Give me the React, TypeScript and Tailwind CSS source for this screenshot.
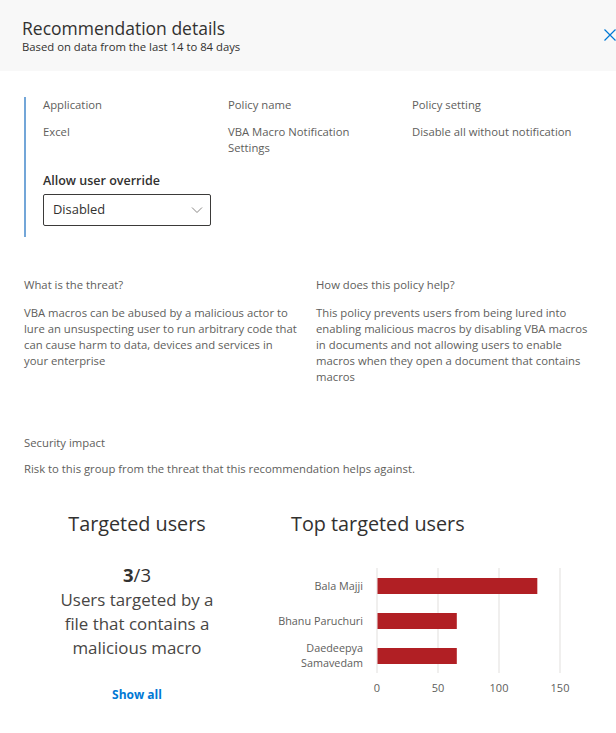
import React from 'react';

const font = { fontFamily: '"Open Sans", "Noto Sans", sans-serif' };

const policyFields = [
  { label: 'Application', value: 'Excel', width: 'max-w-[150px]' },
  { label: 'Policy name', value: 'VBA Macro Notification Settings', width: 'max-w-[150px]' },
  { label: 'Policy setting', value: 'Disable all without notification', width: 'max-w-[180px]' },
];

const topUsers = [
  { name: ['Bala Majji'], count: 131 },
  { name: ['Bhanu Paruchuri'], count: 65 },
  { name: ['Daedeepya', 'Samavedam'], count: 65 },
];

const TopUsersChart = () => {
  const x0 = 107;
  const scale = (290 - 107) / 150;
  const ticks = [0, 50, 100, 150];
  const labelFont = '"Open Sans", sans-serif';
  return (
    <svg width="330" height="140" viewBox="0 0 330 140" className="block">
      {ticks.map((t) => (
        <g key={t}>
          <line x1={x0 + t * scale} x2={x0 + t * scale} y1={6} y2={111} stroke="#e1dfdd" strokeWidth="1" />
          <text x={x0 + t * scale} y={130} textAnchor="middle" fontSize="11" fill="#605e5c" fontFamily={labelFont}>
            {t}
          </text>
        </g>
      ))}
      {topUsers.map((u, i) => {
        const y = 16 + i * 35;
        return (
          <g key={i}>
            <rect x={x0 + 0.5} y={y} width={u.count * scale} height={16} fill="#b11f24" />
            {u.name.length === 1 ? (
              <text x={93} y={y + 12} textAnchor="end" fontSize="10.8" fill="#605e5c" fontFamily={labelFont}>
                {u.name[0]}
              </text>
            ) : (
              <text textAnchor="end" fontSize="10.8" fill="#605e5c" fontFamily={labelFont}>
                <tspan x={93} y={y + 4}>{u.name[0]}</tspan>
                <tspan x={93} y={y + 19}>{u.name[1]}</tspan>
              </text>
            )}
          </g>
        );
      })}
    </svg>
  );
};

export default function App() {
  return (
    <div className="w-[616px] h-[733px] bg-white overflow-hidden text-[#605e5c]" style={font}>
      {/* Header */}
      <div className="h-[71px] bg-[#f8f8f8] flex items-start justify-between pl-[22px] pt-[16px]">
        <div>
          <h1 className="text-[17.5px] leading-[24px] text-[#323130]">Recommendation details</h1>
          <p className="text-[11.3px] leading-[14px] text-[#323130]">Based on data from the last 14 to 84 days</p>
        </div>
        <svg width="12" height="12" viewBox="0 0 12 12" className="mt-[13px]">
          <path d="M0.5 0.5 L11.5 11.5 M11.5 0.5 L0.5 11.5" stroke="#0078d4" strokeWidth="1.2" fill="none" />
        </svg>
      </div>

      {/* Policy block */}
      <div className="ml-[24px] mt-[26px] border-l-[2px] border-[#73a6d8] pl-[17px] pb-[11px] w-[560px]">
        <div className="grid grid-cols-[185px_184px_190px] text-[11.3px] leading-[16px]">
          {policyFields.map((f) => (
            <div key={f.label}>
              <div>{f.label}</div>
              <div className={`mt-[11px] ${f.width}`}>{f.value}</div>
            </div>
          ))}
        </div>
        <div className="mt-[16px] text-[12.5px] leading-[18px] font-semibold text-[#323130]">Allow user override</div>
        <button className="mt-[4px] w-[168px] h-[32px] border border-[#3b3a39] rounded-[2px] flex items-center justify-between pl-[9px] pr-[7px] text-[12.9px] text-[#323130]">
          <span>Disabled</span>
          <svg width="12" height="12" viewBox="0 0 12 12">
            <path d="M1 3.5 L6 8.5 L11 3.5" stroke="#8a8886" strokeWidth="1" fill="none" />
          </svg>
        </button>
      </div>

      {/* Threat / help */}
      <div className="ml-[24px] mt-[40px] grid grid-cols-[292px_284px] text-[11.3px] leading-[16px]">
        <div>
          <div>What is the threat?</div>
          <p className="mt-[12px] w-[275px]">
            VBA macros can be abused by a malicious actor to lure an unsuspecting user to run arbitrary code that can
            cause harm to data, devices and services in your enterprise
          </p>
        </div>
        <div>
          <div>How does this policy help?</div>
          <p className="mt-[12px]">
            This policy prevents users from being lured into enabling malicious macros by disabling VBA macros in
            documents and not allowing users to enable macros when they open a document that contains macros
          </p>
        </div>
      </div>

      {/* Security impact */}
      <div className="ml-[24px] mt-[50px] text-[11.3px] leading-[16px]">
        <div>Security impact</div>
        <div className="mt-[10px]">Risk to this group from the threat that this recommendation helps against.</div>
      </div>

      {/* Charts */}
      <div className="mt-[34px] flex">
        <div className="ml-[24px] w-[226px] flex flex-col items-center text-[#323130]">
          <h2 className="text-[19.8px] leading-[26px]">Targeted users</h2>
          <div className="mt-[25px] text-[18.5px] leading-[26px]">
            <span className="font-bold">3</span>/3
          </div>
          <p className="w-[170px] text-center text-[16.9px] leading-[24px] text-[#484644]">
            Users targeted by a file that contains a malicious macro
          </p>
          <a className="mt-[26px] text-[12px] leading-[18px] font-bold text-[#0078d4]">Show all</a>
        </div>
        <div className="ml-[41px] text-[#323130]">
          <h2 className="text-[19.8px] leading-[26px]">Top targeted users</h2>
          <div className="mt-[25px] -ml-[21px]">
            <TopUsersChart />
          </div>
        </div>
      </div>
    </div>
  );
}
